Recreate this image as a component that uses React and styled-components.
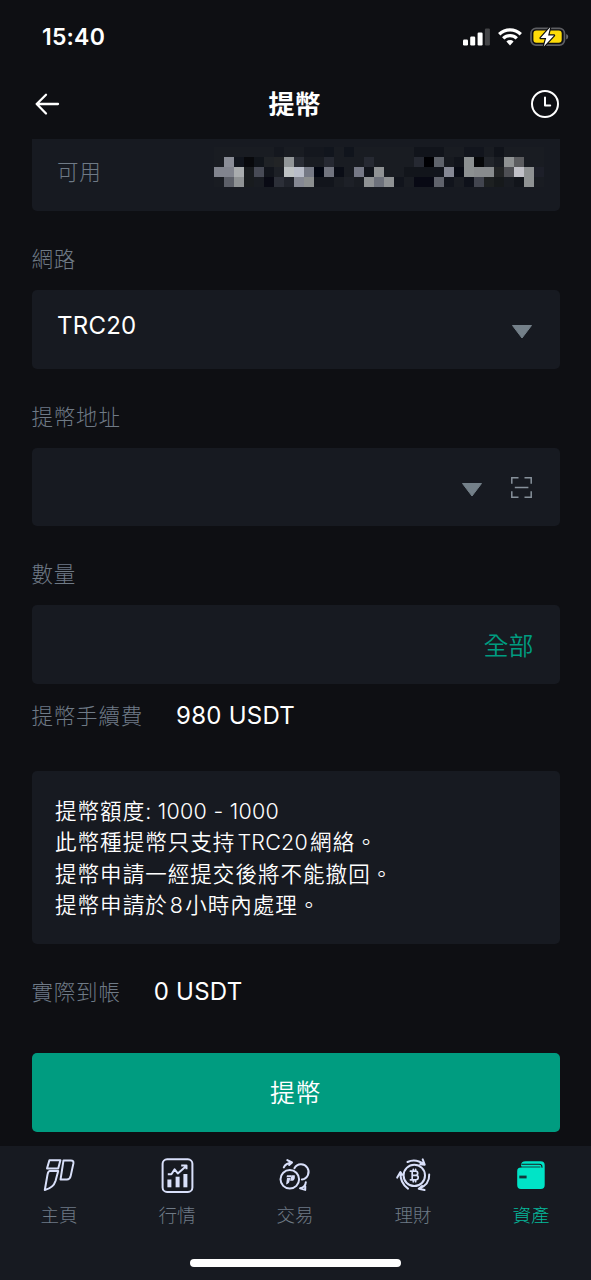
import React from "react";
import styled, { createGlobalStyle } from "styled-components";

const c = {
  page: "#0e0f13",
  card: "#171a21",
  muted: "#6f7a86",
  green: "#009c80",
  icon: "#d9e0fa",
};

const Global = createGlobalStyle`
  * { box-sizing: border-box; }
  body {
    margin: 0;
    background: ${c.page};
    font-family: Inter, "Noto Sans CJK TC", sans-serif;
    color: #fff;
  }
`;

const Screen = styled.main`
  width: 591px;
  height: 1280px;
  display: flex;
  flex-direction: column;
  overflow: hidden;
  background: ${c.page};
`;

const StatusBar = styled.div`
  height: 72px;
  flex: none;
  display: flex;
  justify-content: space-between;
  padding: 1px 22px 0 42px;
  align-items: center;
`;

const Time = styled.span`
  font-size: 23px;
  font-weight: 600;
  letter-spacing: 0.2px;
  padding-top: 1px;
`;

const Header = styled.header`
  height: 67px;
  flex: none;
  display: flex;
  align-items: center;
  justify-content: space-between;
  padding: 0 30px 4px 34px;
`;

const Title = styled.h1`
  margin: 0;
  padding: 2px 2px 0 0;
  font-size: 26px;
  line-height: 36px;
  font-weight: 700;
`;

const Content = styled.section`
  flex: 1;
  min-height: 0;
  padding: 0 31.5px;
  display: flex;
  flex-direction: column;
`;

const AvailableCard = styled.div`
  height: 72px;
  flex: none;
  display: flex;
  justify-content: space-between;
  align-items: flex-start;
  padding: 8px 12.5px 0 25.5px;
  background: ${c.card};
  border-radius: 0 0 5px 5px;
`;

const Mosaic = styled.div`
  display: grid;
  grid-template-columns: repeat(33, 10px);
  grid-auto-rows: 10px;
  margin-right: 3px;
`;

const Cell = styled.i`
  background: ${(p) => p.$tone};
`;

const Muted = styled.span`
  color: ${c.muted};
  font-size: 21.5px;
  letter-spacing: 0.8px;
  line-height: 32px;
  font-weight: 300;
  margin-top: ${(p) => p.$top || 0}px;
`;

const FieldLabel = styled.div`
  height: 79px;
  flex: none;
  padding-top: 32px;
`;

const Field = styled.div`
  height: 78.5px;
  flex: none;
  display: flex;
  align-items: center;
  justify-content: ${(p) => (p.$end ? "flex-end" : "space-between")};
  gap: 27px;
  padding: 2px 27px 0 25.5px;
  background: ${c.card};
  border-radius: 5px;
`;

const Value = styled.span`
  font-size: 24px;
  font-weight: 380;
  line-height: 32px;
  letter-spacing: 0.25px;
  padding-bottom: ${(p) => p.$lift || 0}px;
`;

const AllButton = styled.button`
  border: 0;
  padding: 1px 0 0;
  margin-right: -1px;
  background: none;
  font: inherit;
  font-weight: 350;
  font-size: 25px;
  line-height: 36px;
  color: ${c.green};
`;

const SummaryRow = styled.div`
  height: ${(p) => p.$height}px;
  flex: none;
  display: flex;
  align-items: flex-start;
  gap: 33px;
  padding-top: ${(p) => p.$top}px;
`;

const Notes = styled.div`
  height: 173px;
  flex: none;
  padding: 25px 23.5px 22px;
  background: ${c.card};
  border-radius: 5px;
`;

const Note = styled.p`
  margin: 0;
  height: 31.5px;
  line-height: 31.5px;
  font-size: 21.5px;
  font-weight: 350;
  letter-spacing: 1.05px;
  white-space: nowrap;
`;

const Latin = styled.span`
  letter-spacing: 0.25px;
  margin: 0 ${(p) => p.$gap || 0}px;
`;

const Submit = styled.button`
  height: 79px;
  flex: none;
  border: 0;
  border-radius: 5px;
  padding: 0 0 3px;
  background: ${c.green};
  color: #fff;
  font: inherit;
  font-weight: 350;
  font-size: 25px;
  letter-spacing: 0.5px;
`;

const BottomBar = styled.footer`
  height: 134px;
  flex: none;
  background: ${c.card};
  display: flex;
  flex-direction: column;
  justify-content: space-between;
  align-items: center;
  padding-bottom: 13px;
`;

const Tabs = styled.nav`
  width: 100%;
  display: grid;
  grid-template-columns: repeat(5, 1fr);
  padding: 9px 1px 0 0;
`;

const Tab = styled.a`
  display: flex;
  flex-direction: column;
  align-items: center;
  gap: 6px;
  font-size: 18.5px;
  font-weight: 300;
  line-height: 28px;
  color: ${(p) => (p.$active ? "#05b99c" : c.muted)};
`;

const HomeIndicator = styled.div`
  width: 211px;
  height: 8px;
  border-radius: 4px;
  background: #fff;
`;

const TabSvg = styled.svg`
  width: 40px;
  height: 40px;
  fill: none;
  stroke: ${c.icon};
  stroke-width: 2;
  stroke-linecap: round;
  stroke-linejoin: round;
`;

const mosaicRows = [
  { 6: "#14171e", 9: "#14171e", 10: "#14171e", 11: "#11151d", 13: "#10141c", 20: "#11141b", 21: "#11141b", 22: "#11141b", 25: "#12151d", 26: "#12151d", 28: "#10131a" },
  { 1: "#8a8d97", 2: "#11151d", 3: "#08090c", 4: "#11151b", 5: "#1f2226", 6: "#222426", 7: "#929698", 8: "#2a2d35", 11: "#262932", 15: "#262932", 20: "#262932", 21: "#000003", 22: "#5f636b", 23: "#171a20", 24: "#11141b", 25: "#8c9091", 26: "#060709", 27: "#22252b", 29: "#8f9293", 30: "#5c5d60" },
  { 0: "#81848e", 1: "#81848e", 2: "#a9acae", 3: "#181b1e", 4: "#484b56", 5: "#12151c", 6: "#1d2026", 7: "#bec2c4", 8: "#b9bdc9", 9: "#757985", 10: "#020611", 11: "#71747f", 12: "#0a0d16", 14: "#767986", 15: "#11141b", 16: "#8f9294", 19: "#12151b", 20: "#12151b", 21: "#12151b", 22: "#12151c", 23: "#858894", 24: "#080b14", 25: "#8c9091", 26: "#888b8d", 27: "#888b8d", 28: "#222425", 29: "#4e4f54", 30: "#c1c1c8", 31: "#8f9293", 32: "#1d1f29" },
  { 1: "#5c5f68", 2: "#8f9294", 3: "#181b1e", 5: "#090a14", 6: "#2c2f38", 7: "#20232b", 8: "#858893", 9: "#8c8f90", 10: "#12151c", 11: "#12151c", 13: "#1d2027", 15: "#8f9294", 16: "#6d717b", 17: "#8f9294", 18: "#11141c", 20: "#080914", 21: "#080914", 22: "#60636c", 23: "#11141c", 25: "#0e111a", 26: "#42454f", 27: "#1d2021", 28: "#16191b", 30: "#12151b", 31: "#8f9293" },
];

function StatusIcons() {
  return (
    <svg width="107" height="24" viewBox="0 0 107 24">
      <g fill="#fff">
        <rect x="1" y="14.5" width="5" height="6" rx="1.2" />
        <rect x="8.2" y="11.5" width="5" height="9" rx="1.2" />
        <rect x="15.6" y="7.5" width="5" height="13" rx="1.2" />
        <rect x="22.9" y="3.5" width="5" height="17" rx="1.2" fill="#434447" />
      </g>
      <g fill="none" stroke="#fff" strokeWidth="3.3">
        <path d="M37.2 9.2a15.6 15.6 0 0 1 21.6 0" />
        <path d="M41.2 13.4a9.8 9.8 0 0 1 13.6 0" />
      </g>
      <path d="M44.4 16.5a5.2 5.2 0 0 1 7.2 0L48 20.4z" fill="#fff" />
      <rect x="69" y="3.3" width="33.5" height="16.8" rx="5" fill="none" stroke="#5d5e62" strokeWidth="1.7" />
      <path d="M104.2 9v5.6q2-.8 2-2.8t-2-2.8z" fill="#6a6b70" />
      <rect x="71.4" y="5.6" width="28.3" height="12.2" rx="3" fill="#fedb09" />
      <path d="M88.2 2.2 78.6 13h5.6l-2.4 8.5L92 10.4h-5.9z" fill="#fff" stroke={c.page} strokeWidth="2.4" paintOrder="stroke" strokeLinejoin="round" />
    </svg>
  );
}

const BackIcon = () => (
  <svg width="27" height="26" viewBox="0 0 27 26" fill="none" stroke="#fff" strokeWidth="2.3" strokeLinecap="round" strokeLinejoin="round">
    <path d="M24 13H2.7M12 3.7 2.7 13l9.3 9.5" />
  </svg>
);

const ClockIcon = () => (
  <svg width="31" height="30" viewBox="0 0 31 30" fill="none" stroke="#fff" strokeWidth="2" strokeLinecap="round" strokeLinejoin="round">
    <circle cx="15" cy="15" r="13" />
    <path d="M15 8.5v8h5.2" />
  </svg>
);

const Caret = () => (
  <svg width="22" height="20" viewBox="0 -4 22 20">
    <path d="M1.5 1.5h19L11 14z" fill="#748089" stroke="#748089" strokeLinejoin="round" />
  </svg>
);

const ScanIcon = () => (
  <svg width="23" height="23" viewBox="0 0 23 23" fill="none" stroke="#87919b" strokeWidth="1.5">
    <path d="M8.5 1.8H1.8v6M14.5 1.8h6.7v6M8.5 21.2H1.8v-6M14.5 21.2h6.7v-6M4.8 11.5h13.6" />
  </svg>
);

const HomeIcon = () => (
  <TabSvg viewBox="0 0 40 40">
    <path d="M10.4 5.2h11l-2.2 8.3H8z" />
    <path d="M10.6 16h8.6l-2.6 9.8Q14.4 33 5.8 35l2.7-15.4q.7-3.4 2.1-3.6z" />
    <path d="M24.5 5.4h7.4q3 0 2.5 3l-2.7 12.5q-.8 3.7-3.8 3.7h-6.4z" />
  </TabSvg>
);

const MarketIcon = () => (
  <TabSvg viewBox="0 0 40 40">
    <rect x="5.6" y="4.3" width="29.8" height="32.6" rx="4.5" />
    <g fill={c.icon} stroke="none">
      <rect x="10.4" y="24.5" width="4" height="7.8" />
      <rect x="18.6" y="21.7" width="4" height="10.6" />
      <rect x="26.4" y="19" width="4" height="13.3" />
    </g>
    <path d="M10.8 19.2h3.6l3.2-4.8 3.2 4L29.3 11M24.2 10.6h5.3v3.6" strokeLinecap="butt" />
  </TabSvg>
);

const TradeIcon = () => (
  <TabSvg viewBox="0 0 40 40">
    <circle cx="14.8" cy="24.3" r="9.3" />
    <path d="M19.4 13.2a7.6 7.6 0 1 1 7.5 11.3" />
    <path d="M8.8 12.4Q10.6 8.4 16.8 7.6M12.3 5.1l4.7 2.4-2.8 2.5" />
    <path d="M30.8 27.2q-.3 4.8-5.7 6.1M25 33.4l5.2 1.5.1-3.5" />
    <g fill={c.icon} stroke="none">
      <path d="M12 20.2h4.3l-.4 2.1h-4.4zM12 22.9h3.4l-1.3 4.6q-1.3 1.6-3 1.9zM16.5 20.2h3.2q.8 3.7-1.6 5.6h-3z" />
    </g>
  </TabSvg>
);

const EarnIcon = () => (
  <TabSvg viewBox="0 0 40 40">
    <circle cx="21.3" cy="20.4" r="10.7" />
    <path d="M14.5 7Q22.5 2.9 31.3 9.4M29.7 4.4l2 5.3-4.5-.4" />
    <path d="M7.5 17.3Q6.9 28 15 33.6M4.2 22.6l3.2-5.5 2 2.7" />
    <path d="M36.2 19.6Q36.7 29.4 25.9 33.7M31.6 35l-5.9-1.3 3.4-2.8" />
    <path
      d="M17.4 16.2h5.2a2.1 2.1 0 0 1 0 4.2h-3.4 3.8a2.2 2.2 0 0 1 0 4.4h-5.6M19.2 16.2v8.6M20.3 14.3v1.9M22.6 14.3v1.9M20.3 24.8v1.9M22.6 24.8v1.9"
      strokeWidth="1.7"
    />
  </TabSvg>
);

const WalletIcon = () => (
  <TabSvg viewBox="0 0 40 40">
    <g stroke="none">
      <path d="M10 10.6q0-4.4 4.5-4.4h15.2q4 0 4 4V30q0 4-4 4H10q-3.8 0-3.8-4V16q0-3.7 4.5-3.7z" fill="#00e4c7" />
      <rect x="8.3" y="20.6" width="7.3" height="2.8" fill="#12353b" />
    </g>
    <path d="M11 9.3h17.4q2.6 0 2.6 3" stroke={c.card} strokeWidth="1.1" />
    <path d="M8.5 12H29" stroke={c.card} strokeWidth=".8" />
  </TabSvg>
);

const tabs = [
  ["主頁", HomeIcon],
  ["行情", MarketIcon],
  ["交易", TradeIcon],
  ["理財", EarnIcon],
  ["資產", WalletIcon],
];

export default function App() {
  return (
    <Screen>
      <Global />
      <StatusBar>
        <Time>15:40</Time>
        <StatusIcons />
      </StatusBar>
      <Header>
        <BackIcon />
        <Title>提幣</Title>
        <ClockIcon />
      </Header>
      <Content>
        <AvailableCard>
          <Muted $top={9}>可用</Muted>
          <Mosaic>
            {mosaicRows.flatMap((row, y) =>
              Array.from({ length: 33 }, (_, x) => <Cell key={`${y}-${x}`} $tone={row[x] || "#191c22"} />)
            )}
          </Mosaic>
        </AvailableCard>

        <FieldLabel><Muted>網路</Muted></FieldLabel>
        <Field>
          <Value $lift={9}>TRC20</Value>
          <Caret />
        </Field>

        <FieldLabel><Muted>提幣地址</Muted></FieldLabel>
        <Field $end>
          <Caret />
          <ScanIcon />
        </Field>

        <FieldLabel><Muted>數量</Muted></FieldLabel>
        <Field $end>
          <AllButton>全部</AllButton>
        </Field>

        <SummaryRow $height={87} $top={16}>
          <Muted>提幣手續費</Muted>
          <Value>980 USDT</Value>
        </SummaryRow>

        <Notes>
          <Note>提幣額度<Latin>: 1000 - 1000</Latin></Note>
          <Note>此幣種提幣只支持<Latin $gap={2}>TRC20</Latin>網絡。</Note>
          <Note>提幣申請一經提交後將不能撤回。</Note>
          <Note>提幣申請於<Latin $gap={2}>8</Latin>小時內處理。</Note>
        </Notes>

        <SummaryRow $height={109} $top={32}>
          <Muted>實際到帳</Muted>
          <Value>0 USDT</Value>
        </SummaryRow>

        <Submit>提幣</Submit>
      </Content>
      <BottomBar>
        <Tabs>
          {tabs.map(([label, Icon], i) => (
            <Tab key={label} $active={i === 4}>
              <Icon />
              {label}
            </Tab>
          ))}
        </Tabs>
        <HomeIndicator />
      </BottomBar>
    </Screen>
  );
}
